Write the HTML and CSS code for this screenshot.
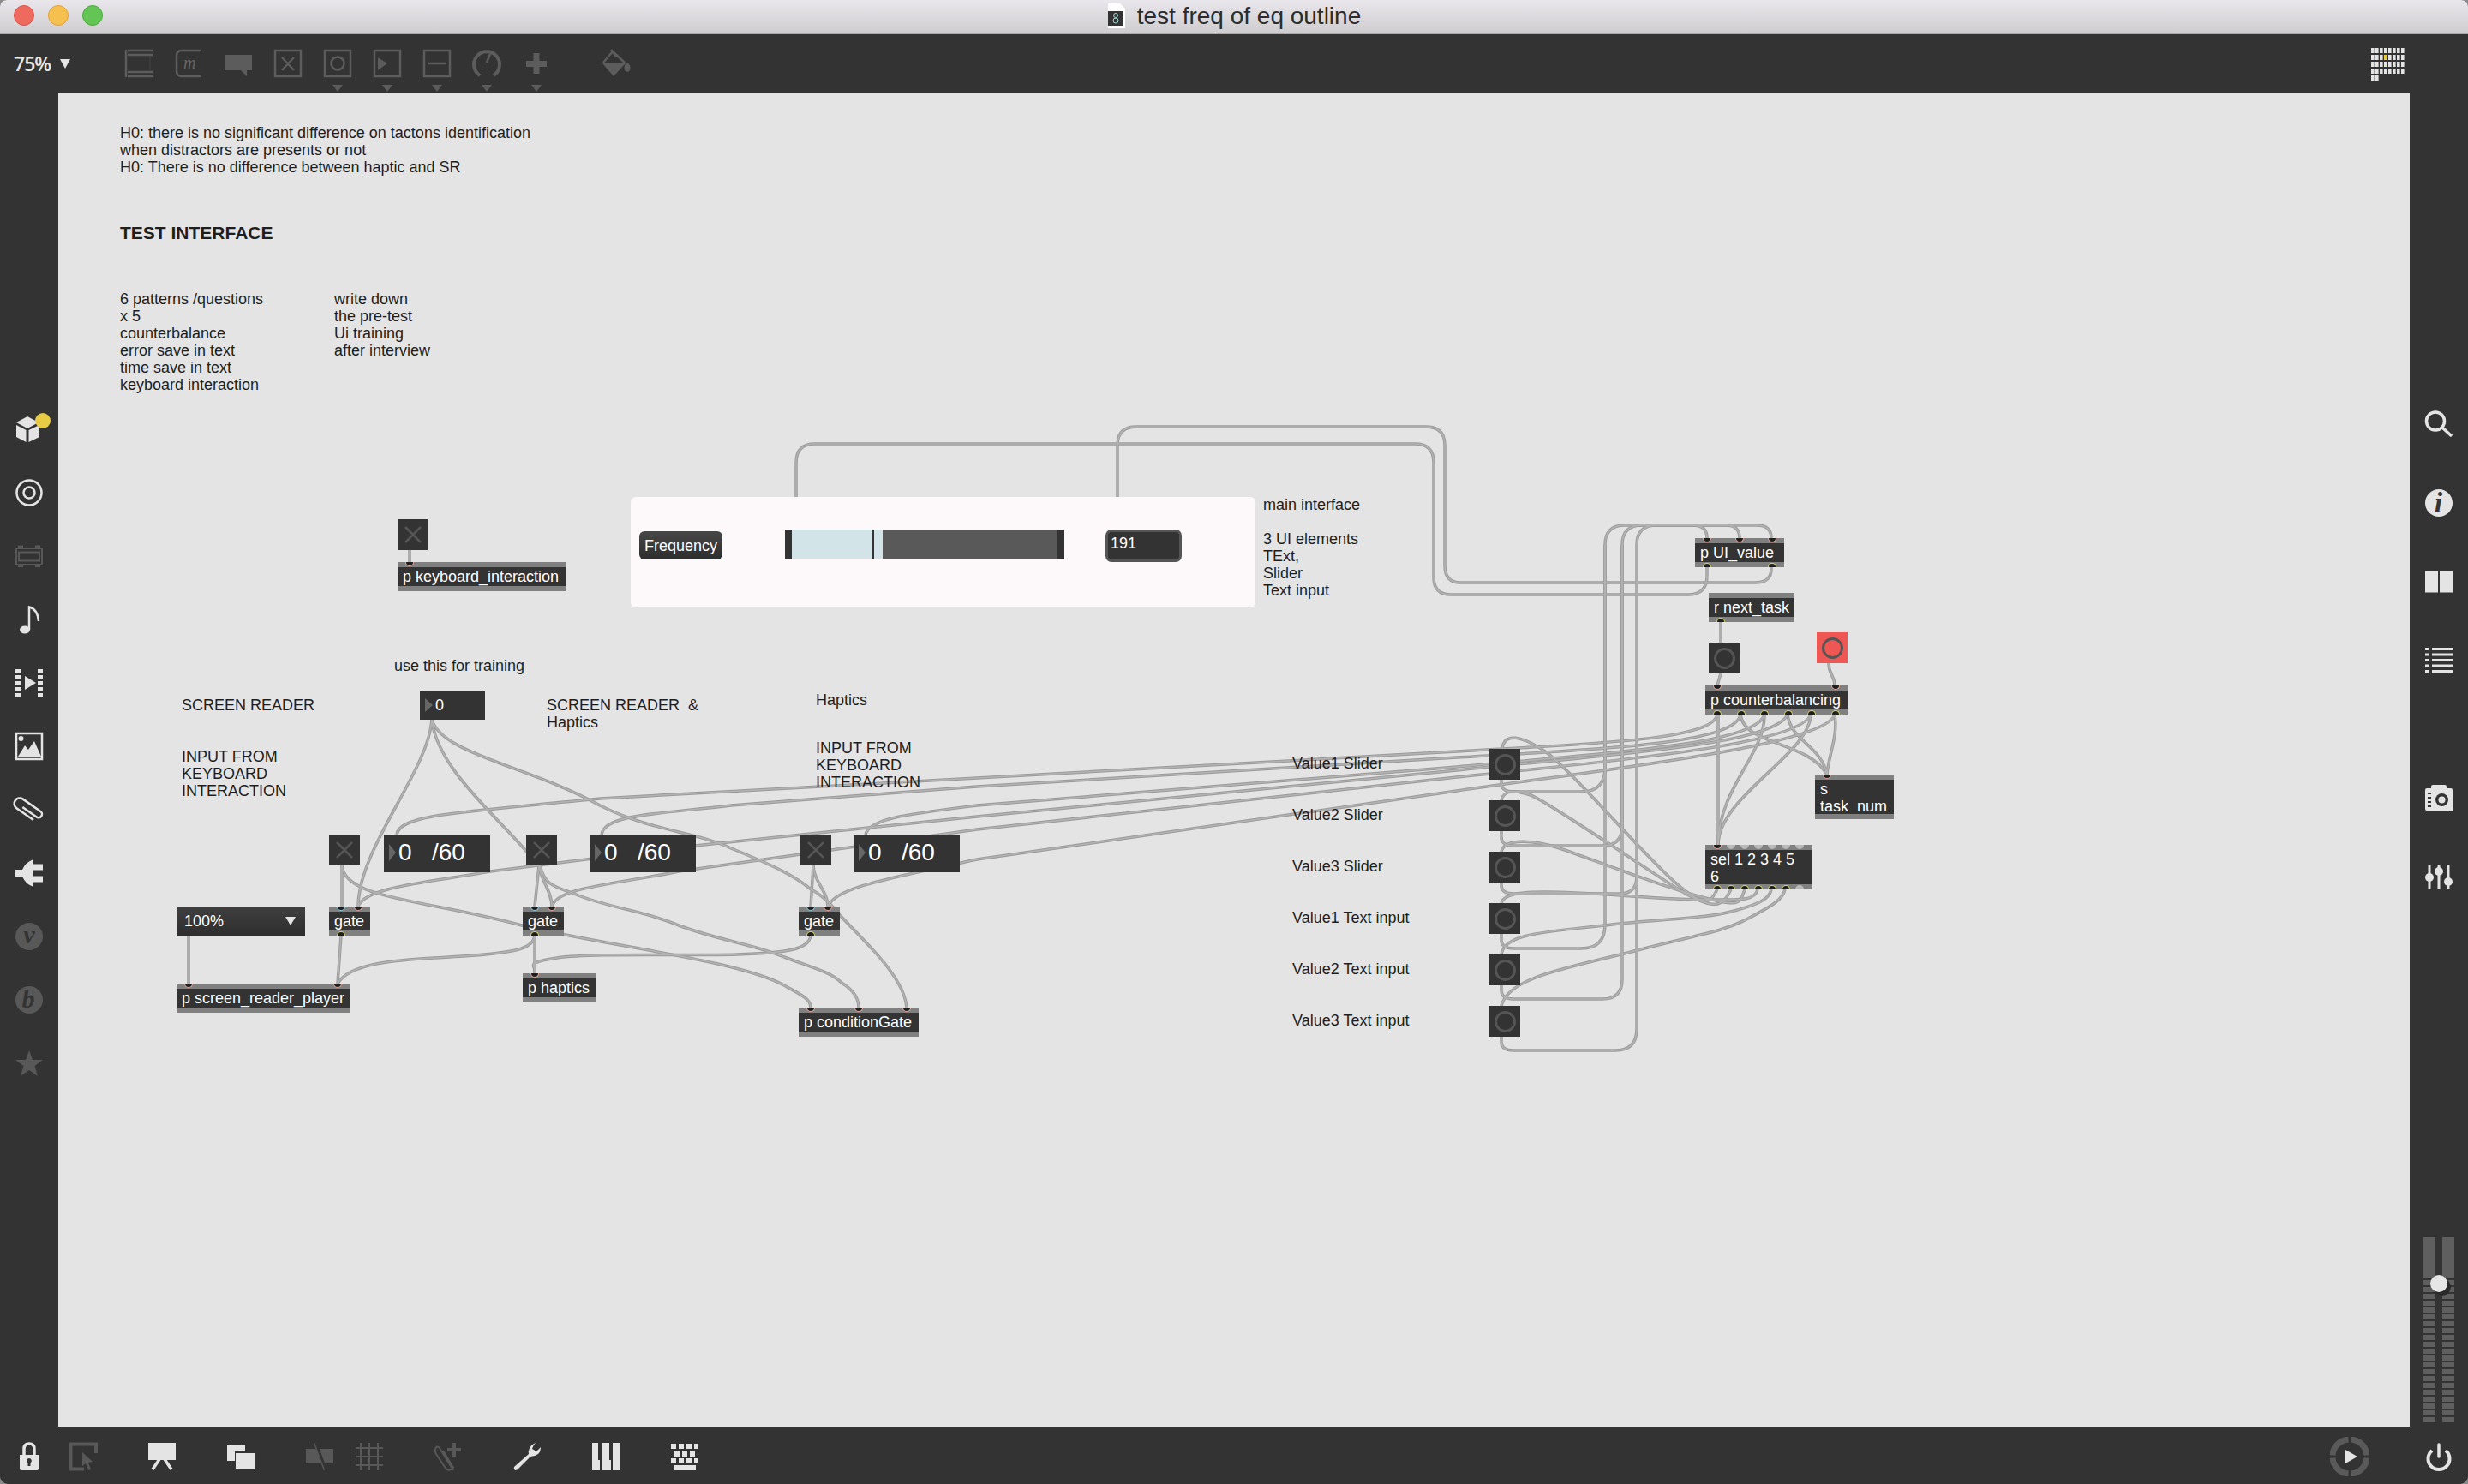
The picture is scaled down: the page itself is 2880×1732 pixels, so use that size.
FILE: index.html
```html
<!DOCTYPE html>
<html lang="en">
<head>
<meta charset="utf-8">
<title>test freq of eq outline</title>
<link rel="stylesheet" href="styles.css">
</head>
<body>
<div class="window">
  <header class="titlebar">
    <div class="lights"><span class="light red"></span><span class="light amber"></span><span class="light green"></span></div>
    <svg class="docicon" viewBox="0 0 22 30"><path class="doc-paper" d="M1 0H15L21 6V29H1Z"/><rect class="doc-label" x="1" y="9" width="18" height="17"/><circle class="doc-ring" cx="10" cy="14" r="2.5"/><circle class="doc-ring" cx="10" cy="20" r="3"/></svg>
    <span class="title">test freq of eq outline</span>
  </header>

  <nav class="toolbar">
    <div class="zoomsel"><span>75%</span><svg class="zoomcaret" viewBox="0 0 12 11"><path d="M0 0H12L6 11Z"/></svg></div>
    <div class="tools">
      <svg class="tool" viewBox="0 0 32 52"><path class="ln" d="M1 0V32M3 1H32M3 6H32M3 26H32M3 31H32"/><path class="ln thin" d="M29 8V24"/></svg>
      <svg class="tool" viewBox="0 0 32 52"><path class="ln" d="M31 1H8Q2 1 2 7V25Q2 31 8 31H31"/><text class="tool-m" x="10" y="22">m</text></svg>
      <svg class="tool" viewBox="0 0 32 52"><path class="fl" d="M0 6H32V24H26V31L19 24H0Z"/></svg>
      <svg class="tool" viewBox="0 0 32 52"><rect class="ln" x="1" y="1" width="30" height="30"/><path class="ln" d="M9 9L23 24M23 9L9 24"/></svg>
      <svg class="tool" viewBox="0 0 32 52"><rect class="ln" x="1" y="1" width="30" height="30"/><circle class="ln" cx="16" cy="16" r="7.5"/><path class="fl" d="M10 41H22L16 49Z"/></svg>
      <svg class="tool" viewBox="0 0 32 52"><rect class="ln" x="1" y="1" width="30" height="30"/><path class="fl" d="M5 9L16 16L5 24Z"/><path class="fl" d="M10 41H22L16 49Z"/></svg>
      <svg class="tool" viewBox="0 0 32 52"><rect class="ln" x="1" y="1" width="30" height="30"/><path class="ln" d="M5 16H27"/><path class="fl" d="M10 41H22L16 49Z"/></svg>
      <svg class="tool" viewBox="0 0 32 52"><path class="ln thick" d="M8 30A15 15 0 1 1 24 30"/><path class="ln" d="M16 15L20 5"/><path class="fl" d="M10 41H22L16 49Z"/></svg>
      <svg class="tool" viewBox="0 0 32 52"><path class="fl" d="M12.500 4H19.500V13H28V20H19.500V28H12.500V20H4V13H12.500Z"/><path class="fl" d="M10 41H22L16 49Z"/></svg>
      <svg class="tool bucket" viewBox="0 0 34 52"><path class="fl" d="M1 16H28L14 31Z"/><path class="ln" d="M2 15L13 2L27 15M11 0L17 8"/><ellipse class="fl" cx="30" cy="21" rx="3.500" ry="5"/></svg>
    </div>
    <svg class="gridmeter" viewBox="0 0 40 38">
      <defs><pattern id="cpu" width="5" height="8" patternUnits="userSpaceOnUse"><rect width="3.600" height="6"/></pattern></defs>
      <rect class="cpu-cells" width="40" height="32"/><rect class="cpu-cells" y="32" width="10" height="6"/>
      <rect class="cpu-on" x="15" y="8" width="3.600" height="6"/>
    </svg>
  </nav>

  <div class="main">
    <aside class="rail rail-left">
      <svg class="ri" viewBox="0 0 32 32"><path class="wh" d="M14 1L27 8L14 15L1 8Z"/><path class="wh" d="M1 11L12.500 17V31L1 25Z"/><path class="wh" d="M15.500 17L28 11V25L15.500 31Z"/><circle class="yel" cx="32" cy="6" r="9"/></svg>
      <svg class="ri" viewBox="0 0 32 32"><circle class="wl" cx="16" cy="16" r="14.500"/><circle class="wl" cx="16" cy="16" r="6.500"/></svg>
      <svg class="ri" viewBox="0 0 32 32"><rect class="dl" x="1" y="7" width="30" height="19"/><path class="dl" d="M4 11.500H28V21.500H4Z"/><path class="dm" d="M3 3.500H9V7H3ZM23 3.500H29V7H23ZM3 26H9V29H3ZM23 26H29V29H23Z"/></svg>
      <svg class="ri" viewBox="0 0 32 32"><ellipse class="wh" cx="11" cy="28" rx="6" ry="4.500"/><path class="wl" d="M16 28V1.500Q26 4 27 18"/></svg>
      <svg class="ri" viewBox="0 0 32 32"><path class="wh" d="M0 0H6V4H0ZM0 7H6V11H0ZM0 14H6V18H0ZM0 21H6V25H0ZM0 28H6V32H0ZM26 0H32V4H26ZM26 7H32V11H26ZM26 14H32V18H26ZM26 21H32V25H26ZM26 28H32V32H26Z"/><path class="wh" d="M11 8L24 16L11 24Z"/></svg>
      <svg class="ri" viewBox="0 0 32 32"><rect class="wl" x="1" y="1" width="30" height="30"/><path class="wh" d="M3 28L11 15L15 20L22 10L30 28Z"/><ellipse class="wh" cx="6.500" cy="7" rx="3" ry="3"/></svg>
      <svg class="ri" viewBox="0 0 32 32"><path class="wl" transform="rotate(35 16 16)" d="M8 18H28A4 4 0 0 0 28 10H3A6.500 6.500 0 0 0 3 23H27"/></svg>
      <svg class="ri" viewBox="0 0 32 32"><path class="wh" d="M0 12H8Q12 3 21 0V5.500H32V12.500H21V19.500H32V26.500H21V32Q12 29 8 20H0Z"/></svg>
      <svg class="ri" viewBox="0 0 32 32"><circle class="dm" cx="16" cy="16" r="16"/><text class="badge" x="16" y="24">v</text></svg>
      <svg class="ri" viewBox="0 0 32 32"><circle class="dm" cx="16" cy="16" r="16"/><text class="badge" x="15" y="25">b</text></svg>
      <svg class="ri" viewBox="0 0 32 32"><path class="dm" d="M16 1L20 12H32L22.500 19L26 31L16 24L6 31L9.500 19L0 12H12Z"/></svg>
    </aside>

    <section class="canvas">
      <svg class="cords" viewBox="68 108 2744 1558">
        <defs>
          <g id="cordset">
            <path d="M478,642V656"/>
            <path d="M504,840C500,900 418,990 418,1058"/>
            <path d="M504,840C510,900 590,960 628,1010"/>
            <path d="M504,840C515,880 620,895 700,940C760,970 810,970 853,990C890,1005 925,1020 945,1037C960,1045 970,1055 979,1067C1010,1100 1055,1140 1058,1176"/>
            <path d="M399,1010V1058"/>
            <path d="M399,1010C402,1050 500,1050 609,1080C700,1103 860,1120 915,1150C932,1160 946,1165 946,1176"/>
            <path d="M629,1010L624,1058"/>
            <path d="M629,1010C632,1030 644,1040 644,1058"/>
            <path d="M630,1010C636,1035 650,1035 670,1043C710,1060 750,1062 792,1080C840,1098 880,1102 915,1117C950,1130 970,1135 982,1147C995,1155 1002,1165 1002,1176"/>
            <path d="M949,1010L946,1058"/>
            <path d="M949,1010C950,1030 966,1040 966,1058"/>
            <path d="M220,1092V1148"/>
            <path d="M398,1092L394,1148"/>
            <path d="M624,1092C622,1108 600,1112 540,1116S410,1120 394,1148"/>
            <path d="M624,1092V1136"/>
            <path d="M946,1092C944,1108 920,1112 860,1114S690,1112 650,1118S626,1126 624,1136"/>
            <path d="M463,974C466,950 540,948 700,932L1140,908L1700,877C1850,868 1998,865 2004,834"/>
            <path d="M702,974C705,950 770,950 853,940L1140,918L1700,884C1850,875 2025,870 2031,834"/>
            <path d="M1010,974C1014,955 1060,950 1140,940L1700,895C1860,880 2050,870 2059,834"/>
            <path d="M418,1058C425,1035 500,1030 572,1017L811,987L1140,953L1700,899C1880,880 2070,870 2086,834"/>
            <path d="M644,1058C650,1035 720,1032 792,1017L1140,968L1700,907C1880,888 2100,870 2113,834"/>
            <path d="M966,1058C975,1035 1040,1025 1140,1003L1700,923C1880,897 2130,870 2141,834"/>
            <path d="M2005,834V986"/>
            <path d="M2059,834C2060,880 2005,920 2005,986"/>
            <path d="M2113,834C2112,880 2005,930 2005,986"/>
            <path d="M2031,834C2035,870 2110,865 2132,904"/>
            <path d="M2086,834C2090,865 2125,870 2132,904"/>
            <path d="M2141,834C2145,860 2134,880 2132,904"/>
            <path d="M1753,874C1755,855 1775,858 1803,877S1920,1000 1955,1030S1995,1055 2004,1038"/>
            <path d="M1752,934C1755,920 1770,923 1786,928S1900,1000 1951,1033S2010,1058 2020,1038"/>
            <path d="M1752,994C1755,978 1790,980 1820,990S1940,1035 1986,1047S2030,1055 2036,1038"/>
            <path d="M1752,1054C1755,1040 1790,1040 1838,1042S1950,1050 1990,1050S2048,1052 2051,1038"/>
            <path d="M1752,1114C1755,1090 1800,1088 1872,1080S1990,1072 2020,1064S2065,1050 2067,1038"/>
            <path d="M1752,1174C1760,1140 1830,1130 1907,1110S2010,1088 2040,1072S2080,1050 2083,1038"/>
            <path d="M1752,910V914Q1752,924 1766,924H1845Q1873,924 1873,896V636Q1873,613 1896,613H1975Q1992,613 1992,628"/>
            <path d="M1752,1090V1097Q1752,1107 1766,1107H1845Q1873,1107 1873,1079V636"/>
            <path d="M1752,970V977Q1752,987 1766,987H1870Q1893,987 1893,964V636Q1893,613 1916,613H2014Q2030,613 2030,628"/>
            <path d="M1752,1150V1156Q1752,1166 1766,1166H1870Q1893,1166 1893,1143V636"/>
            <path d="M1752,1030V1033Q1752,1043 1766,1043H1890Q1910,1043 1910,1023V636Q1910,613 1933,613H2050Q2067,613 2067,628"/>
            <path d="M1752,1210V1216Q1752,1226 1766,1226H1885Q1910,1226 1910,1201V1023"/>
            <path d="M2067,662V664Q2067,680 2048,680H1704Q1686,680 1686,660V520Q1686,498 1664,498H1326Q1304,498 1304,520V580"/>
            <path d="M1992,662V672Q1992,694 1970,694H1693Q1673,694 1673,674V540Q1673,518 1651,518H951Q929,518 929,540V580"/>
            <path d="M2008,726V750"/>
            <path d="M2008,786L2004,800"/>
            <path d="M2134,774C2134,788 2141,788 2141,800"/>
          </g>
        </defs>
        <use href="#cordset" class="cord-outer"/>
        <use href="#cordset" class="cord-inner"/>
      </svg>

      <p class="note n-hypo">H0: there is no significant difference on tactons identification<br>when distractors are presents or not<br>H0: There is no difference between haptic and SR</p>
      <p class="note n-test">TEST INTERFACE</p>
      <p class="note n-list1">6 patterns /questions<br>x 5<br>counterbalance<br>error save in text<br>time save in text<br>keyboard interaction</p>
      <p class="note n-list2">write down<br>the pre-test<br>Ui training<br>after interview</p>
      <p class="note n-train">use this for training</p>
      <p class="note n-sr">SCREEN READER</p>
      <p class="note n-input1">INPUT FROM<br>KEYBOARD<br>INTERACTION</p>
      <p class="note n-srh">SCREEN READER &nbsp;&amp;<br>Haptics</p>
      <p class="note n-haptics">Haptics</p>
      <p class="note n-input2">INPUT FROM<br>KEYBOARD<br>INTERACTION</p>
      <p class="note n-main">main interface<br><br>3 UI elements<br>TExt,<br>Slider<br>Text input</p>
      <div class="note value-labels">
        <span>Value1 Slider</span><span>Value2 Slider</span><span>Value3 Slider</span>
        <span>Value1 Text input</span><span>Value2 Text input</span><span>Value3 Text input</span>
      </div>

      <div class="panel">
        <div class="freq">Frequency</div>
        <div class="slider"><i class="cap"></i><div class="fill"><i class="thumb"></i></div><div class="track"></div><i class="cap"></i></div>
        <div class="textin">191</div>
      </div>

      <div class="toggle t-kbd"><svg class="x" viewBox="0 0 20 20"><path d="M1 1L19 19M19 1L1 19"/></svg></div>
      <div class="toggle t-1"><svg class="x" viewBox="0 0 20 20"><path d="M1 1L19 19M19 1L1 19"/></svg></div>
      <div class="toggle t-2"><svg class="x" viewBox="0 0 20 20"><path d="M1 1L19 19M19 1L1 19"/></svg></div>
      <div class="toggle t-3"><svg class="x" viewBox="0 0 20 20"><path d="M1 1L19 19M19 1L1 19"/></svg></div>

      <div class="box b-kbd"><div class="ports"><i class="in"></i></div><div class="txt">p keyboard_interaction</div><div class="ports"></div></div>
      <div class="box b-ui"><div class="ports"><i class="in"></i><i class="in"></i><i class="in"></i></div><div class="txt">p UI_value</div><div class="ports"><i class="out"></i><i class="out"></i></div></div>
      <div class="box b-next"><div class="ports"></div><div class="txt">r next_task</div><div class="ports"><i class="out"></i></div></div>
      <div class="box b-counter"><div class="ports"><i class="in"></i><i class="in"></i></div><div class="txt">p counterbalancing</div><div class="ports"><i class="out"></i><i class="out"></i><i class="out"></i><i class="out"></i><i class="out"></i><i class="out"></i></div></div>
      <div class="box b-task"><div class="ports"><i class="in"></i></div><div class="txt two">s<br>task_num</div><div class="ports"></div></div>
      <div class="box b-sel"><div class="ports"><i class="in"></i><i class="off top"></i><i class="off top"></i><i class="off top"></i><i class="off top"></i><i class="off top"></i><i class="off top"></i></div><div class="txt two">sel 1 2 3 4 5<br>6</div><div class="ports"><i class="out"></i><i class="out"></i><i class="out"></i><i class="out"></i><i class="out"></i><i class="out"></i><i class="off bot"></i></div></div>
      <div class="box b-g1"><div class="ports"><i class="in blue"></i><i class="in"></i></div><div class="txt">gate</div><div class="ports"><i class="out"></i></div></div>
      <div class="box b-g2"><div class="ports"><i class="in blue"></i><i class="in"></i></div><div class="txt">gate</div><div class="ports"><i class="out"></i></div></div>
      <div class="box b-g3"><div class="ports"><i class="in blue"></i><i class="in"></i></div><div class="txt">gate</div><div class="ports"><i class="out"></i></div></div>
      <div class="box b-player"><div class="ports"><i class="in"></i><i class="in"></i></div><div class="txt">p screen_reader_player</div><div class="ports"></div></div>
      <div class="box b-haptics"><div class="ports"><i class="in"></i></div><div class="txt">p haptics</div><div class="ports"></div></div>
      <div class="box b-cond"><div class="ports"><i class="in"></i><i class="in"></i><i class="in"></i></div><div class="txt">p conditionGate</div><div class="ports"></div></div>

      <div class="num num-small n0"><i class="arrow"></i><span>0</span></div>
      <div class="num num-big n1"><i class="arrow"></i><span>0   /60</span></div>
      <div class="num num-big n2"><i class="arrow"></i><span>0   /60</span></div>
      <div class="num num-big n3"><i class="arrow"></i><span>0   /60</span></div>

      <div class="umenu"><span>100%</span><svg class="umenu-caret" viewBox="0 0 12 10"><path d="M0 0H12L6 10Z"/></svg></div>

      <div class="bang-stack">
        <div class="bang"><i></i></div><div class="bang"><i></i></div><div class="bang"><i></i></div>
        <div class="bang"><i></i></div><div class="bang"><i></i></div><div class="bang"><i></i></div>
      </div>
      <div class="bang bang-next"><i></i></div>
      <div class="bang bang-red"><i></i></div>
    </section>

    <aside class="rail rail-right">
      <svg class="ri" viewBox="0 0 32 32"><circle class="wl thick" cx="12" cy="12.500" r="10.500"/><path class="wl thick" d="M20 20L31 30"/></svg>
      <svg class="ri" viewBox="0 0 32 32"><circle class="wh" cx="16" cy="16" r="16"/><text class="info" x="15.500" y="27">i</text></svg>
      <svg class="ri" viewBox="0 0 32 32"><path class="wh" d="M0 3.500H15V28.500H0ZM17 3.500H32V28.500H17Z"/></svg>
      <svg class="ri" viewBox="0 0 32 32"><path class="wh" d="M0 1H5V4H0ZM8 1H32V4H8ZM0 7.500H5V10.500H0ZM8 7.500H32V10.500H8ZM0 14H5V17H0ZM8 14H32V17H8ZM0 20.500H5V23.500H0ZM8 20.500H32V23.500H8ZM0 27H5V30H0ZM8 27H32V30H8Z"/></svg>
      <svg class="ri ri-camera" viewBox="0 0 32 32"><path class="wh" d="M7 5V3Q7 1 9 1H23Q25 1 25 3V5H30Q32 5 32 7V31H2Q0 31 0 29V7Q0 5 2 5Z"/><circle class="dk" cx="19.500" cy="18.500" r="7.500"/><circle class="wh" cx="19.500" cy="18.500" r="4"/><path class="dk" d="M3 10H7V12H3ZM3 15H7V17H3ZM3 20H7V22H3ZM3 25H7V27H3Z"/></svg>
      <svg class="ri" viewBox="0 0 32 32"><path class="wh" d="M3.500 2H6.500V30H3.500ZM14.500 2H17.500V30H14.500ZM25.500 2H28.500V30H25.500Z"/><circle class="wh" cx="5" cy="17" r="5"/><circle class="wh" cx="16" cy="10" r="5"/><circle class="wh" cx="27" cy="22" r="5"/></svg>
      <svg class="meter" viewBox="0 0 36 216">
        <defs><pattern id="seg" width="36" height="8" patternUnits="userSpaceOnUse" y="50"><rect width="36" height="6"/></pattern></defs>
        <rect class="meter-bar" width="14" height="48"/><rect class="meter-bar" x="22" width="14" height="48"/>
        <rect class="meter-seg" y="50" width="14" height="166"/><rect class="meter-seg" x="22" y="50" width="14" height="166"/>
        <circle class="knob-shadow" cx="22" cy="58" r="10"/><circle class="knob" cx="18" cy="54" r="10"/>
      </svg>
    </aside>
  </div>

  <footer class="statusbar">
    <svg class="si s-lock" viewBox="0 0 32 32"><path class="wl thick" d="M10 15V7Q10 1 16 1Q22 1 22 7V15"/><path class="wh" d="M5 14H27V30Q27 32 25 32H7Q5 32 5 30ZM16 18A3 3 0 0 0 14.500 23.500V27H17.500V23.500A3 3 0 0 0 16 18Z"/></svg>
    <svg class="si s-edit" viewBox="0 0 32 32"><path class="dl thick" d="M31 12V1.500H1.500V30.500H17"/><path class="dm" d="M15 11L27 22L22 23L25 31L22 32L19 24L15 27Z"/></svg>
    <svg class="si s-pres" viewBox="0 0 32 32"><path class="wh" d="M0 0H32V20H0Z"/><path class="wl thick" d="M13 19L5 31M19 19L27 31"/></svg>
    <svg class="si s-win" viewBox="0 0 32 32"><path class="wh" d="M0 3H21V9H9V21H0Z"/><path class="wh" d="M10 12H32V30H10Z"/></svg>
    <svg class="si s-mute" viewBox="0 0 32 32"><path class="dm" d="M0 7H32V24H0Z"/><path class="mute-slash" d="M11 0L23 32"/><path class="mute-line" d="M9.500 0L21.500 32"/></svg>
    <svg class="si s-grid" viewBox="0 0 32 32"><path class="dl" d="M0 6H32M0 16H32M0 26H32M6 0V32M16 0V32M26 0V32"/></svg>
    <svg class="si s-clip" viewBox="0 0 32 32"><path class="dl" d="M22 32L6 6Q2 2 1 8Q0 10 2 13L14 31Q19 33 22 29L10 9"/><path class="dm" d="M21 0H25V6H31V10H25V16H21V10H15V6H21Z"/></svg>
    <svg class="si s-wrench" viewBox="0 0 32 32"><path class="wh" d="M26 0Q21 2 19 6Q17 10 18 13L1 28Q0 30 2 32Q5 32 6 30L20 16Q25 16 29 13Q32 10 32 5L27 10L22 7Q23 3 26 0Z"/></svg>
    <svg class="si s-piano" viewBox="0 0 32 32"><path class="wh" d="M0 0H7V20H9V32H0ZM11 0H20V20H22V32H11V20H11ZM24 0H32V32H24V20H24Z"/></svg>
    <svg class="si s-keys" viewBox="0 0 32 32"><path class="wh" d="M0 1H6V7H0ZM9 1H15V7H9ZM18 1H24V7H18ZM27 1H32V7H27ZM4 10H10V16H4ZM13 10H19V16H13ZM22 10H28V16H22ZM0 18H6V24H0ZM9 18H15V24H9ZM18 18H24V24H18ZM27 18H32V24H27ZM3 26H29V32H3Z"/></svg>
    <svg class="transport" viewBox="0 0 46 46"><path class="ring" d="M21.500 3A20 20 0 0 0 3 21.500M24.500 3A20 20 0 0 1 43 21.500M43 24.500A20 20 0 0 1 24.500 43M21.500 43A20 20 0 0 1 3 24.500"/><path class="wh" d="M18 15L32 23L18 31Z"/></svg>
    <svg class="power" viewBox="0 0 30 32"><path class="wl power-arc" d="M7 9A12.500 12.500 0 1 0 23 9"/><path class="wl power-bar" d="M15 2V16"/></svg>
  </footer>
</div>
</body>
</html>
```
FILE: styles.css
```css
* { box-sizing: border-box; }
html, body { margin: 0; padding: 0; background: #8a8a8a; }
body { font-family: "Liberation Sans", Arial, sans-serif; }

.window {
  width: 2880px;
  height: 1732px;
  display: flex;
  flex-direction: column;
  background: #333;
  border-radius: 8px 8px 10px 10px;
  overflow: hidden;
}

/* title bar */
.titlebar {
  height: 40px;
  flex: none;
  position: relative;
  display: flex;
  align-items: center;
  justify-content: center;
  gap: 13px;
  background: linear-gradient(#e9e7eb, #cfcdd0);
  border-bottom: 2px solid #a9a9a9;
}
.lights { position: absolute; left: 16px; top: 6px; display: flex; gap: 16px; }
.light { width: 24px; height: 24px; border-radius: 50%; border: 1px solid; }
.red { background: #ee6a5f; border-color: #d6544a; }
.amber { background: #f6c04f; border-color: #dea236; }
.green { background: #62c554; border-color: #4aa93e; }
.docicon { width: 22px; height: 30px; }
.doc-paper { fill: #fff; }
.doc-label { fill: #333; }
.doc-ring { fill: none; stroke: #9fd8d8; stroke-width: 1; }
.title { font-size: 28px; line-height: 32px; color: #2c2c2c; }

/* top toolbar */
.toolbar {
  height: 68px;
  flex: none;
  display: flex;
  align-items: flex-start;
  background: #333;
  padding-top: 18px;
}
.zoomsel {
  width: 146px;
  padding: 0 0 0 16px;
  display: flex;
  align-items: center;
  gap: 11px;
  height: 32px;
  color: #e8e8e8;
  font-family: "Open Sans", sans-serif;
  font-size: 23px;
  font-weight: 600;
  letter-spacing: -1px;
}
.zoomcaret { width: 12px; height: 11px; fill: #e4e4e4; }
.tools { display: flex; gap: 26px; }
.tool { width: 32px; height: 52px; overflow: visible; flex: none; }
.bucket { margin-left: 34px; width: 34px; }
.ln { fill: none; stroke: #5c5c5c; stroke-width: 2.5; }
.ln.thin { stroke: #444; stroke-width: 1; }
.ln.thick { stroke-width: 4; }
.fl { fill: #5c5c5c; }
.tool-m { font-family: "Liberation Serif", serif; font-style: italic; font-size: 20px; fill: #666; }
.gridmeter { width: 40px; height: 38px; margin-left: auto; margin-right: 73px; margin-top: -2px; flex: none; }
#cpu rect { fill: #e4e4e4; }
.cpu-cells { fill: url(#cpu); }
.cpu-on { fill: #e8cb3e; }

/* main row */
.main { flex: 1; display: flex; min-height: 0; }
.rail { width: 68px; flex: none; display: flex; flex-direction: column; align-items: center; background: #333; }
.rail-left { padding-top: 356px; }
.rail-left .ri { margin: 21px 0; }
.rail-right { padding: 371px 0 6px; gap: 60px; }
.ri { width: 32px; height: 32px; overflow: visible; flex: none; }
.ri-camera { margin-top: 68px; }
.wh { fill: #e4e4e4; }
.wl { fill: none; stroke: #e4e4e4; stroke-width: 2.5; }
.wl.thick { stroke-width: 3.5; }
.dk { fill: #333; }
.dm { fill: #585858; }
.dl { fill: none; stroke: #585858; stroke-width: 2; }
.dl.thick { stroke-width: 4; }
.yel { fill: #e8cb45; }
.badge { font-family: "Liberation Serif", serif; font-style: italic; font-weight: 700; font-size: 30px; text-anchor: middle; fill: #333; }
.info { font-family: "Liberation Serif", serif; font-style: italic; font-weight: 700; font-size: 34px; text-anchor: middle; fill: #333; }
.meter { width: 36px; height: 216px; margin-top: auto; flex: none; overflow: visible; }
.meter-bar { fill: #5f5f5f; }
#seg rect { fill: #5f5f5f; }
.meter-seg { fill: url(#seg); }
.knob { fill: #e6e6e6; }
.knob-shadow { fill: #2a2a2a; }

/* canvas */
.canvas { flex: 1; position: relative; background: #e4e4e4; overflow: hidden; }
.cords { position: absolute; left: 0; top: 0; width: 2744px; height: 1558px; z-index: 1; }
.cords use { fill: none; }
.cord-outer { stroke: #9b9b9b; stroke-width: 3.500; }
.cord-inner { stroke: #b3b3b3; stroke-width: 1.5; }

.note { position: absolute; margin: 0; z-index: 2; font-size: 18px; line-height: 20px; color: #1e1e1e; white-space: nowrap; }
.n-hypo { left: 72px; top: 37px; }
.n-test { left: 72px; top: 154px; font-weight: 700; font-size: 21px; }
.n-list1 { left: 72px; top: 231px; }
.n-list2 { left: 322px; top: 231px; }
.n-train { left: 392px; top: 659px; }
.n-sr { left: 144px; top: 705px; }
.n-input1 { left: 144px; top: 765px; }
.n-srh { left: 570px; top: 705px; }
.n-haptics { left: 884px; top: 699px; }
.n-input2 { left: 884px; top: 755px; }
.n-main { left: 1406px; top: 471px; }
.value-labels { left: 1440px; top: 773px; display: flex; flex-direction: column; gap: 40px; }

/* presentation panel */
.panel {
  position: absolute;
  z-index: 2;
  left: 668px;
  top: 472px;
  width: 729px;
  height: 129px;
  padding: 38px 0 0 10px;
  display: flex;
  align-items: flex-start;
  background: #fdf9fa;
  border-radius: 6px;
}
.freq {
  width: 97px;
  height: 33px;
  margin-top: 2px;
  border-radius: 6px;
  background: linear-gradient(#474747, #2d2d2d);
  color: #fff;
  font-size: 18px;
  line-height: 35px;
  text-align: center;
}
.slider { width: 326px; height: 34px; margin-left: 73px; display: flex; }
.cap { width: 8px; background: #333; }
.fill { width: 106px; background: #d2e4e7; position: relative; }
.thumb { position: absolute; left: 94px; top: 0; width: 2px; height: 100%; background: #333; }
.track { flex: 1; background: #595959; }
.textin {
  width: 89px;
  height: 38px;
  margin-left: 48px;
  padding-left: 3px;
  border: 3px solid #555;
  border-radius: 7px;
  background: #333;
  color: #fff;
  font-size: 18px;
  line-height: 27px;
}

/* max objects */
.box { position: absolute; z-index: 2; display: flex; flex-direction: column; background: #333; color: #fff; font-size: 18px; }
.ports { height: 6px; background: #808080; display: flex; justify-content: space-between; padding: 0 9px; }
.ports:last-child { align-items: flex-end; }
.txt { padding: 0 6px; line-height: 22px; white-space: nowrap; }
.txt.two { height: 40px; padding-top: 1px; line-height: 20px; }
.ports i { display: block; width: 10px; height: 5px; flex: none; }
.in { background: #1f1f1f; border: 1px solid #eba89a; border-top: 0; border-radius: 0 0 6px 6px; }
.in.blue { border-color: #8fd3e8; }
.out { background: #1f1f1f; border: 1px solid #dcd862; border-bottom: 0; border-radius: 6px 6px 0 0; }
.off { background: #b9b9b9; }
.off.top { border-radius: 0 0 6px 6px; }
.off.bot { border-radius: 6px 6px 0 0; }

.b-kbd { left: 396px; top: 548px; width: 196px; }
.b-ui { left: 1910px; top: 520px; width: 104px; }
.b-next { left: 1926px; top: 584px; width: 100px; }
.b-counter { left: 1922px; top: 692px; width: 166px; }
.b-task { left: 2050px; top: 796px; width: 92px; }
.b-sel { left: 1922px; top: 878px; width: 124px; }
.b-g1 { left: 316px; top: 950px; width: 48px; }
.b-g2 { left: 542px; top: 950px; width: 48px; }
.b-g3 { left: 864px; top: 950px; width: 48px; }
.b-player { left: 138px; top: 1040px; width: 202px; }
.b-haptics { left: 542px; top: 1028px; width: 86px; }
.b-cond { left: 864px; top: 1068px; width: 140px; }

.toggle { position: absolute; z-index: 2; width: 36px; height: 36px; background: #333; display: flex; align-items: center; justify-content: center; }
.x { width: 20px; height: 20px; }
.x path { fill: none; stroke: #555; stroke-width: 2.500; }
.t-kbd { left: 396px; top: 498px; }
.t-1 { left: 316px; top: 866px; }
.t-2 { left: 546px; top: 866px; }
.t-3 { left: 866px; top: 866px; }

.num { position: absolute; z-index: 2; background: #333; color: #fff; display: flex; align-items: center; white-space: pre; }
.arrow { width: 0; height: 0; border-style: solid; border-color: transparent transparent transparent #666; }
.num-small { left: 422px; top: 698px; width: 76px; height: 34px; padding-left: 6px; font-size: 18px; gap: 3px; }
.num-small .arrow { border-width: 8px 0 8px 9px; }
.num-big { top: 866px; width: 124px; height: 44px; padding: 0 0 2px 6px; font-size: 28px; gap: 3px; }
.num-big .arrow { border-width: 10px 0 10px 8px; }
.n1 { left: 380px; }
.n2 { left: 620px; }
.n3 { left: 928px; }

.umenu {
  position: absolute;
  z-index: 2;
  left: 138px;
  top: 950px;
  width: 150px;
  height: 34px;
  padding: 0 11px 0 9px;
  display: flex;
  align-items: center;
  justify-content: space-between;
  background: linear-gradient(#3f3f3f, #2e2e2e);
  color: #fff;
  font-size: 18px;
}
.umenu-caret { width: 12px; height: 10px; fill: #e4e4e4; }

.bang { width: 36px; height: 36px; background: #333; display: flex; align-items: center; justify-content: center; }
.bang i { display: block; width: 25px; height: 25px; border: 3px solid #555; border-radius: 50%; }
.bang-stack { position: absolute; z-index: 2; left: 1670px; top: 766px; display: flex; flex-direction: column; gap: 24px; }
.bang-next { position: absolute; z-index: 2; left: 1926px; top: 642px; }
.bang-red { position: absolute; z-index: 2; left: 2052px; top: 630px; background: #ee5753; }

/* bottom bar */
.statusbar { height: 66px; flex: none; display: flex; align-items: flex-start; padding-top: 18px; background: #333; }
.si { width: 32px; height: 32px; flex: none; overflow: visible; }
.s-lock { margin-left: 18px; }
.s-edit { margin-left: 31px; }
.s-pres, .s-win, .s-mute, .s-clip, .s-wrench, .s-piano, .s-keys { margin-left: 60px; }
.s-grid { margin-left: 26px; }
.mute-slash { fill: none; stroke: #333; stroke-width: 4; }
.mute-line { fill: none; stroke: #585858; stroke-width: 1.500; }
.transport { width: 46px; height: 46px; margin-left: auto; margin-top: -7px; flex: none; }
.ring { fill: none; stroke: #5a5a5a; stroke-width: 7; }
.power { width: 30px; height: 32px; margin-left: 66px; margin-right: 19px; flex: none; overflow: visible; }
.power-arc { stroke-width: 4; }
.power-bar { stroke-width: 3.500; stroke-linecap: round; }
```
